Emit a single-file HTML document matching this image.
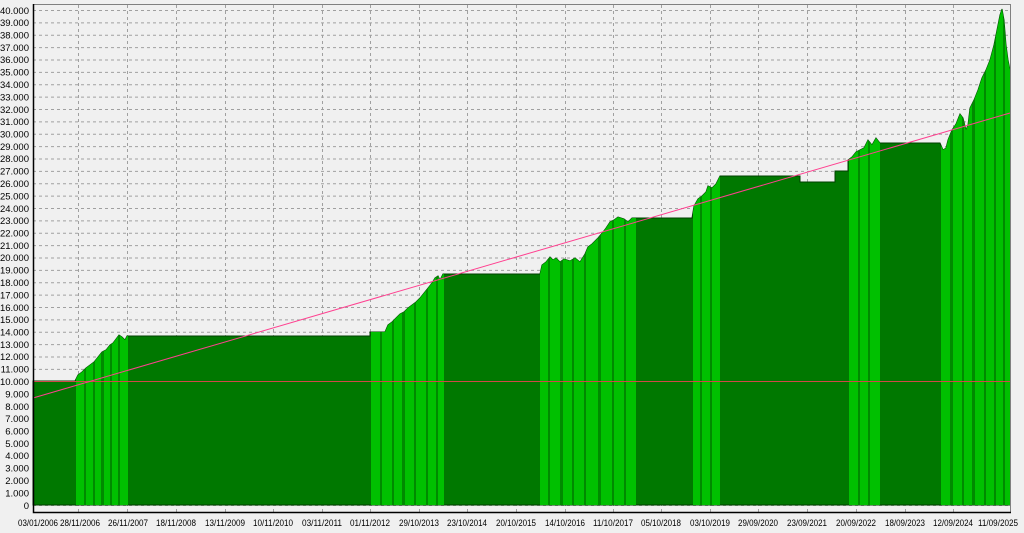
<!DOCTYPE html>
<html><head><meta charset="utf-8"><style>
html,body{margin:0;padding:0;background:#f0f0f0;}
svg{display:block}
text{font-family:"Liberation Sans",sans-serif;font-size:9.5px;fill:#000}
.xl text{font-size:9px}
</style></head><body>
<svg width="1024" height="533" viewBox="0 0 1024 533" xmlns="http://www.w3.org/2000/svg">
<rect x="0" y="0" width="1024" height="533" fill="#f0f0f0"/>
<g stroke="#a0a0a0" stroke-width="1" stroke-dasharray="3,3" fill="none">
<path d="M33 10.5H1010M33 22.9H1010M33 35.2H1010M33 47.6H1010M33 60H1010M33 72.4H1010M33 84.8H1010M33 97.1H1010M33 109.5H1010M33 121.9H1010M33 134.3H1010M33 146.6H1010M33 159H1010M33 171.4H1010M33 183.8H1010M33 196.1H1010M33 208.5H1010M33 220.9H1010M33 233.3H1010M33 245.6H1010M33 258H1010M33 270.4H1010M33 282.8H1010M33 295.1H1010M33 307.5H1010M33 319.9H1010M33 332.3H1010M33 344.6H1010M33 357H1010M33 369.4H1010M33 381.8H1010M33 394.1H1010M33 406.5H1010M33 418.9H1010M33 431.3H1010M33 443.6H1010M33 456H1010M33 468.4H1010M33 480.8H1010M33 493.1H1010M33 505.5H1010"/>
<path d="M78.5 5V512M127.5 5V512M176.5 5V512M225.5 5V512M273.5 5V512M322.5 5V512M370.5 5V512M419.5 5V512M467.5 5V512M516.5 5V512M565.5 5V512M613.5 5V512M661.5 5V512M710.5 5V512M758.5 5V512M807.5 5V512M856.5 5V512M905.5 5V512M953.5 5V512"/>
</g>
<defs><clipPath id="c"><polygon points="33,381 75,381 78,375 82,372 86,368 90,365 94,362 98,357 102,352 106,350 110,345 113,343 116,339 119,335 122,337 125,340 127,336 370,336 370,332 385,332 388,325 392,322 396,318 400,314 404,312 408,308 412,305 416,302 420,298 424,293 428,288 432,283 435,278 438,276 440,280 443,274 540,274 542,265 546,262 550,257 553,260 556,258 560,262 564,259 570,261 575,258 580,262 585,254 588,247 592,244 598,238 603,232 606,228 610,222 614,220 618,217 624,219 628,222 632,218 635,218 692,218 694,206 698,199 702,196 706,192 708,186 712,188 716,184 720,176 800,176 800,182 835,182 835,171 848,171 848,160 852,157 856,152 860,150 864,148 868,140 872,145 876,138 880,143 940,143 943,150 946,148 948,140 952,130 956,124 960,114 963,118 966,130 968,125 970,108 974,100 978,90 982,78 986,70 990,60 994,45 997,30 1000,15 1002,9 1004,20 1006,45 1008,60 1010,70 1010,505 33,505"/></clipPath></defs>
<polygon points="33,381 75,381 78,375 82,372 86,368 90,365 94,362 98,357 102,352 106,350 110,345 113,343 116,339 119,335 122,337 125,340 127,336 370,336 370,332 385,332 388,325 392,322 396,318 400,314 404,312 408,308 412,305 416,302 420,298 424,293 428,288 432,283 435,278 438,276 440,280 443,274 540,274 542,265 546,262 550,257 553,260 556,258 560,262 564,259 570,261 575,258 580,262 585,254 588,247 592,244 598,238 603,232 606,228 610,222 614,220 618,217 624,219 628,222 632,218 635,218 692,218 694,206 698,199 702,196 706,192 708,186 712,188 716,184 720,176 800,176 800,182 835,182 835,171 848,171 848,160 852,157 856,152 860,150 864,148 868,140 872,145 876,138 880,143 940,143 943,150 946,148 948,140 952,130 956,124 960,114 963,118 966,130 968,125 970,108 974,100 978,90 982,78 986,70 990,60 994,45 997,30 1000,15 1002,9 1004,20 1006,45 1008,60 1010,70 1010,505 33,505" fill="#007800" stroke="#004000" stroke-width="1"/>
<g clip-path="url(#c)" fill="#00c000">
<rect x="76" y="0" width="52" height="505"/>
<rect x="371" y="0" width="73" height="505"/>
<rect x="540" y="0" width="96" height="505"/>
<rect x="693" y="0" width="27" height="505"/>
<rect x="849" y="0" width="31" height="505"/>
<rect x="941" y="0" width="69" height="505"/>
</g>
<g clip-path="url(#c)" fill="#008a00">
<rect x="84" y="0" width="2" height="505"/><rect x="93" y="0" width="2" height="505"/><rect x="101" y="0" width="3" height="505"/><rect x="110" y="0" width="2" height="505"/><rect x="118" y="0" width="2" height="505"/>
<rect x="380" y="0" width="2" height="505"/><rect x="392" y="0" width="2" height="505"/><rect x="402" y="0" width="3" height="505"/><rect x="414" y="0" width="2" height="505"/><rect x="426" y="0" width="2" height="505"/><rect x="436" y="0" width="2" height="505"/>
<rect x="548" y="0" width="2" height="505"/><rect x="560" y="0" width="3" height="505"/><rect x="572" y="0" width="2" height="505"/><rect x="584" y="0" width="2" height="505"/><rect x="598" y="0" width="3" height="505"/><rect x="612" y="0" width="2" height="505"/><rect x="624" y="0" width="2" height="505"/>
<rect x="700" y="0" width="2" height="505"/><rect x="710" y="0" width="2" height="505"/>
<rect x="858" y="0" width="2" height="505"/><rect x="868" y="0" width="2" height="505"/>
<rect x="950" y="0" width="3" height="505"/><rect x="962" y="0" width="2" height="505"/><rect x="972" y="0" width="3" height="505"/><rect x="984" y="0" width="2" height="505"/><rect x="994" y="0" width="2" height="505"/><rect x="1003" y="0" width="2" height="505"/>
</g>
<line x1="33" y1="381.5" x2="1010" y2="381.5" stroke="#d04848" stroke-width="1"/>
<line x1="33" y1="398" x2="1010" y2="113" stroke="#ff4090" stroke-width="1"/>
<path d="M33 4.5H1010.5V512" stroke="#808080" fill="none"/>
<path d="M33.5 4V512.5H1011" stroke="#000" stroke-width="1.5" fill="none"/>
<g text-anchor="end">
<text x="29" y="14">40.000</text><text x="29" y="26">39.000</text><text x="29" y="38.5">38.000</text><text x="29" y="51">37.000</text><text x="29" y="63">36.000</text><text x="29" y="75.5">35.000</text><text x="29" y="88">34.000</text><text x="29" y="100.5">33.000</text><text x="29" y="113">32.000</text><text x="29" y="125">31.000</text><text x="29" y="137.5">30.000</text><text x="29" y="150">29.000</text><text x="29" y="162">28.000</text><text x="29" y="174.5">27.000</text><text x="29" y="187">26.000</text><text x="29" y="199.5">25.000</text><text x="29" y="212">24.000</text><text x="29" y="224">23.000</text><text x="29" y="236.5">22.000</text><text x="29" y="249">21.000</text><text x="29" y="261">20.000</text><text x="29" y="273.5">19.000</text><text x="29" y="286">18.000</text><text x="29" y="298.5">17.000</text><text x="29" y="311">16.000</text><text x="29" y="323">15.000</text><text x="29" y="335.5">14.000</text><text x="29" y="348">13.000</text><text x="29" y="360">12.000</text><text x="29" y="372.5">11.000</text><text x="29" y="385">10.000</text><text x="29" y="397.5">9.000</text><text x="29" y="410">8.000</text><text x="29" y="422">7.000</text><text x="29" y="434.5">6.000</text><text x="29" y="447">5.000</text><text x="29" y="459">4.000</text><text x="29" y="471.5">3.000</text><text x="29" y="484">2.000</text><text x="29" y="496.5">1.000</text><text x="29" y="509">0</text>
</g>
<g text-anchor="middle" class="xl">
<text x="38" y="526" textLength="40" lengthAdjust="spacingAndGlyphs">03/01/2006</text><text x="80" y="526" textLength="40" lengthAdjust="spacingAndGlyphs">28/11/2006</text><text x="128" y="526" textLength="40" lengthAdjust="spacingAndGlyphs">26/11/2007</text><text x="176" y="526" textLength="40" lengthAdjust="spacingAndGlyphs">18/11/2008</text><text x="225" y="526" textLength="40" lengthAdjust="spacingAndGlyphs">13/11/2009</text><text x="273" y="526" textLength="40" lengthAdjust="spacingAndGlyphs">10/11/2010</text><text x="322" y="526" textLength="40" lengthAdjust="spacingAndGlyphs">03/11/2011</text><text x="370" y="526" textLength="40" lengthAdjust="spacingAndGlyphs">01/11/2012</text><text x="419" y="526" textLength="40" lengthAdjust="spacingAndGlyphs">29/10/2013</text><text x="467" y="526" textLength="40" lengthAdjust="spacingAndGlyphs">23/10/2014</text><text x="516" y="526" textLength="40" lengthAdjust="spacingAndGlyphs">20/10/2015</text><text x="565" y="526" textLength="40" lengthAdjust="spacingAndGlyphs">14/10/2016</text><text x="613" y="526" textLength="40" lengthAdjust="spacingAndGlyphs">11/10/2017</text><text x="661" y="526" textLength="40" lengthAdjust="spacingAndGlyphs">05/10/2018</text><text x="710" y="526" textLength="40" lengthAdjust="spacingAndGlyphs">03/10/2019</text><text x="758" y="526" textLength="40" lengthAdjust="spacingAndGlyphs">29/09/2020</text><text x="807" y="526" textLength="40" lengthAdjust="spacingAndGlyphs">23/09/2021</text><text x="856" y="526" textLength="40" lengthAdjust="spacingAndGlyphs">20/09/2022</text><text x="905" y="526" textLength="40" lengthAdjust="spacingAndGlyphs">18/09/2023</text><text x="953" y="526" textLength="40" lengthAdjust="spacingAndGlyphs">12/09/2024</text><text x="998" y="526" textLength="40" lengthAdjust="spacingAndGlyphs">11/09/2025</text>
</g>
</svg>
</body></html>
